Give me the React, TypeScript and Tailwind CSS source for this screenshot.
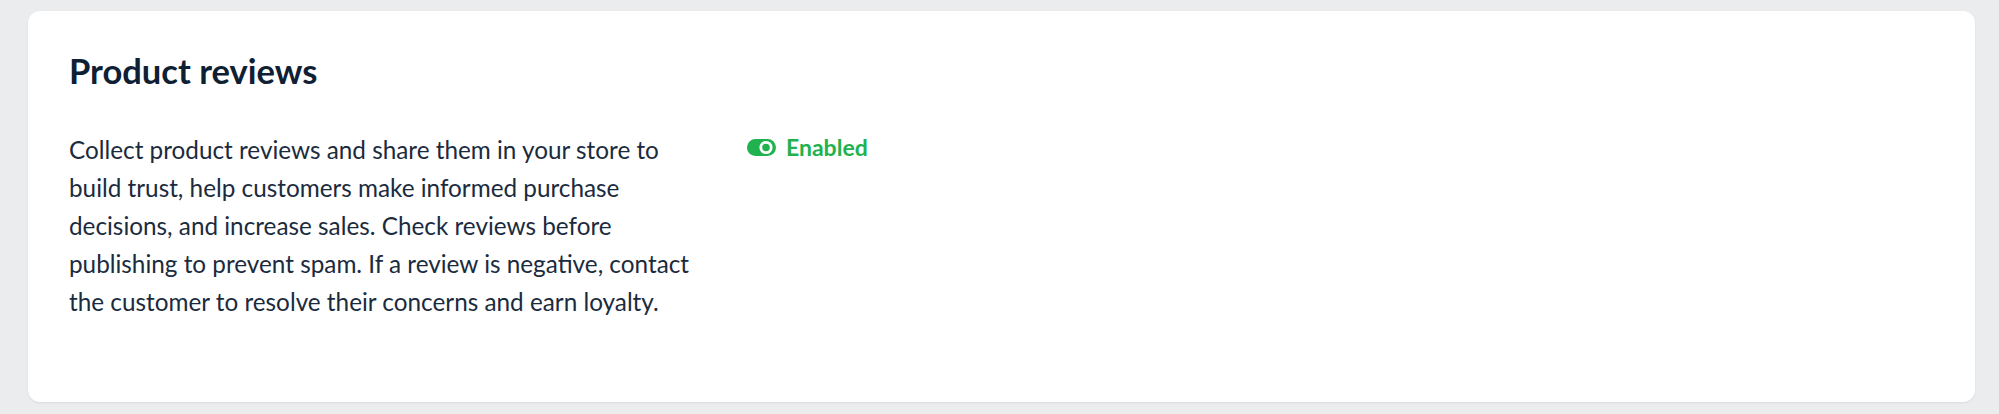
import React from 'react';

const ToggleOn: React.FC = () => (
  <svg width="29" height="17" viewBox="0 0 29 17" className="shrink-0">
    <rect x="0" y="0" width="29" height="17" rx="8.5" fill="#1fb24e" />
    <circle cx="19" cy="8.5" r="5.2" fill="#1fb24e" stroke="#ffffff" strokeWidth="2.8" />
  </svg>
);

const App: React.FC = () => {
  return (
    <div className="w-[1999px] h-[414px] bg-[#ebecee] pt-[11px] pl-[28px] font-['Lato','Noto_Sans',sans-serif]">
      <div className="w-[1947px] h-[391px] bg-white rounded-[12px] shadow-[0_1px_2px_rgba(0,0,0,0.08)] px-[41px] pt-[40px]">
        <h2 className="text-[34.5px] leading-[40px] font-bold text-[#0f2035]">Product reviews</h2>
        <div className="flex mt-[40px] gap-[38px]">
          <p className="w-[640px] text-[24.3px] leading-[38px] text-[#1b2b3e]">
            Collect product reviews and share them in your store to build trust, help customers make informed purchase decisions, and increase sales. Check reviews before publishing to prevent spam. If a review is negative, contact the customer to resolve their concerns and earn loyalty.
          </p>
          <div className="flex items-center gap-[10px] h-[33px]">
            <ToggleOn />
            <span className="text-[23px] leading-[33px] font-bold text-[#1fb24e]">Enabled</span>
          </div>
        </div>
      </div>
    </div>
  );
};

export default App;
